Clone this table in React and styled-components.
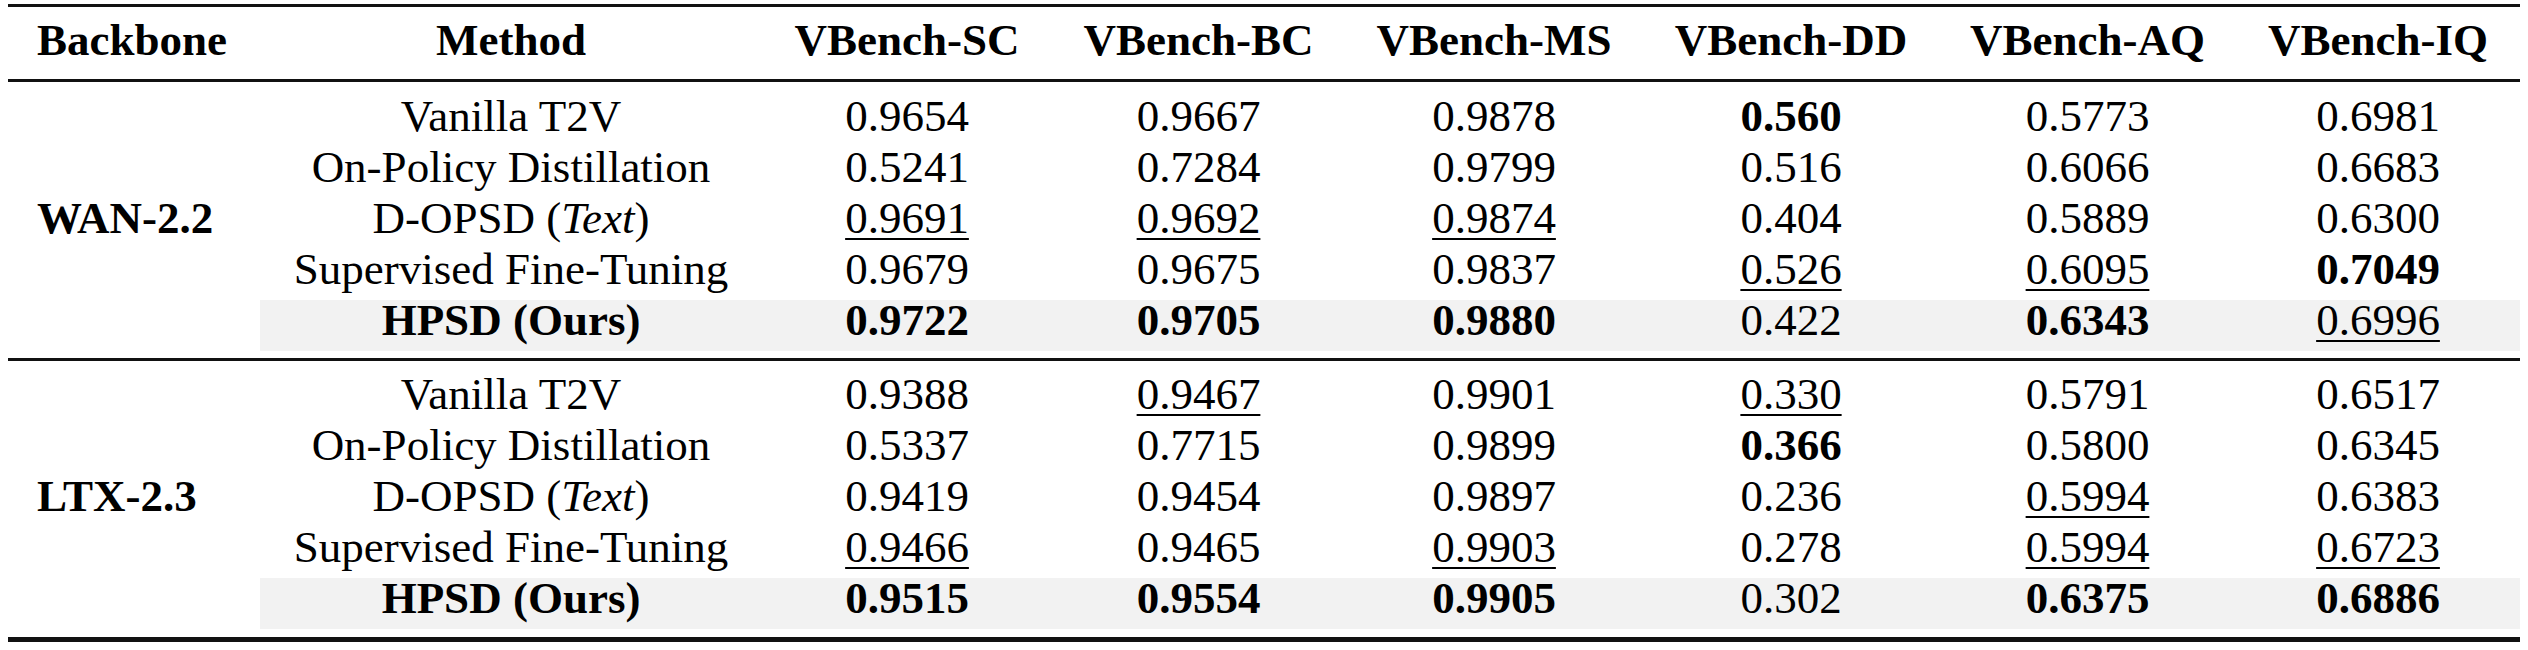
import React from 'react';
import styled, { createGlobalStyle } from 'styled-components';

const GlobalStyle = createGlobalStyle`
	html, body {
		margin: 0;
		padding: 0;
		background: #fff;
	}
	body {
		font-family: 'Liberation Serif', 'Times New Roman', serif;
		color: #000;
	}
`;

const COLS = '252px 502px 290px 293px 298px 296px 297px 284px';

const Page = styled.div`
	padding: 4px 0 0 8px;
	width: 2512px;
`;

const Rule = styled.div`
	height: ${(props) => props.$size}px;
	background: #111;
`;

const HeadRow = styled.div`
	display: grid;
	grid-template-columns: ${COLS};
	height: 72px;
`;

const HeadCell = styled.div`
	padding: 13px 0 19px;
	line-height: 40px;
	font-size: 45px;
	font-weight: bold;
	white-space: nowrap;
	text-align: ${(props) => (props.$left ? 'left' : 'center')};
	padding-left: ${(props) => (props.$left ? '29px' : '0')};
`;

const Block = styled.div`
	display: grid;
	grid-template-columns: ${COLS};
	grid-template-rows: repeat(5, 51px);
	padding: ${(props) => props.$top}px 0 ${(props) => props.$bottom}px;
`;

const Backbone = styled.div`
	grid-row: 1 / span 5;
	align-self: center;
	padding-left: 29px;
	line-height: 40px;
	margin-bottom: 11px;
	font-size: 45px;
	font-weight: bold;
	white-space: nowrap;
`;

const Cell = styled.div`
	height: 51px;
	box-sizing: border-box;
	padding-bottom: 11px;
	line-height: 40px;
	font-size: 45px;
	text-align: center;
	white-space: nowrap;
	background: ${(props) => (props.$hl ? '#f2f2f2' : 'transparent')};
	font-weight: ${(props) => (props.$hl && props.$method ? 'bold' : 'normal')};
`;

const Best = styled.span`
	font-weight: bold;
`;

const Second = styled.span`
	text-decoration: underline;
	text-decoration-thickness: 2px;
	text-underline-offset: 5px;
	text-decoration-skip-ink: none;
`;

const headers = ['VBench-SC', 'VBench-BC', 'VBench-MS', 'VBench-DD', 'VBench-AQ', 'VBench-IQ'];

const methods = [
	'Vanilla T2V',
	'On-Policy Distillation',
	<>
		D-OPSD (<i>Text</i>)
	</>,
	'Supervised Fine-Tuning',
	'HPSD (Ours)',
];

// b = best (bold), u = second best (underlined)
const groups = [
	{
		name: 'WAN-2.2',
		top: 14,
		bottom: 7,
		rows: [
			['0.9654', '0.9667', '0.9878', 'b0.560', '0.5773', '0.6981'],
			['0.5241', '0.7284', '0.9799', '0.516', '0.6066', '0.6683'],
			['u0.9691', 'u0.9692', 'u0.9874', '0.404', '0.5889', '0.6300'],
			['0.9679', '0.9675', '0.9837', 'u0.526', 'u0.6095', 'b0.7049'],
			['b0.9722', 'b0.9705', 'b0.9880', '0.422', 'b0.6343', 'u0.6996'],
		],
	},
	{
		name: 'LTX-2.3',
		top: 13,
		bottom: 8,
		rows: [
			['0.9388', 'u0.9467', '0.9901', 'u0.330', '0.5791', '0.6517'],
			['0.5337', '0.7715', '0.9899', 'b0.366', '0.5800', '0.6345'],
			['0.9419', '0.9454', '0.9897', '0.236', 'u0.5994', '0.6383'],
			['u0.9466', '0.9465', 'u0.9903', '0.278', 'u0.5994', 'u0.6723'],
			['b0.9515', 'b0.9554', 'b0.9905', '0.302', 'b0.6375', 'b0.6886'],
		],
	},
];

const Value = ({ raw }) => {
	if (raw[0] === 'b') return <Best>{raw.slice(1)}</Best>;
	if (raw[0] === 'u') return <Second>{raw.slice(1)}</Second>;
	return raw;
};

const Group = ({ group }) => (
	<Block $top={group.top} $bottom={group.bottom}>
		<Backbone>{group.name}</Backbone>
		{group.rows.map((row, i) => {
			const hl = i === group.rows.length - 1;
			return (
				<React.Fragment key={i}>
					<Cell $hl={hl} $method>
						{methods[i]}
					</Cell>
					{row.map((v, j) => (
						<Cell key={j} $hl={hl}>
							<Value raw={v} />
						</Cell>
					))}
				</React.Fragment>
			);
		})}
	</Block>
);

const App = () => (
	<>
		<GlobalStyle />
		<Page>
			<Rule $size={3} />
			<HeadRow>
				<HeadCell $left>Backbone</HeadCell>
				<HeadCell>Method</HeadCell>
				{headers.map((h) => (
					<HeadCell key={h}>{h}</HeadCell>
				))}
			</HeadRow>
			<Rule $size={3} />
			<Group group={groups[0]} />
			<Rule $size={3} />
			<Group group={groups[1]} />
			<Rule $size={5} />
		</Page>
	</>
);

export default App;
